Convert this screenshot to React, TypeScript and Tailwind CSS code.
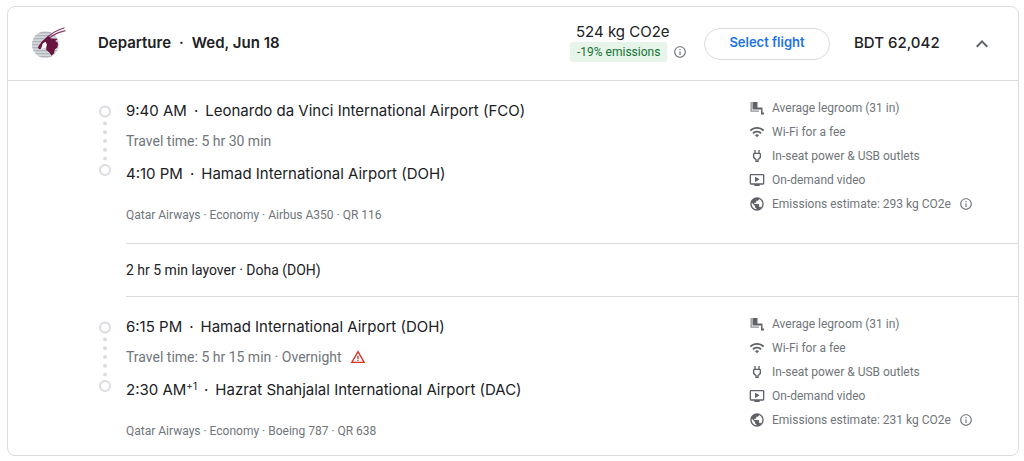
import { useState } from "react";
import type { ReactNode } from "react";
import {
  MdExpandLess,
  MdInfoOutline,
  MdOndemandVideo,
  MdOutlinePower,
  MdPublic,
  MdWarningAmber,
  MdWifi,
} from "react-icons/md";

type Flight = {
  departTime: string;
  from: string;
  duration: string;
  overnight?: boolean;
  arriveTime: string;
  dayOffset?: string;
  to: string;
  details: string;
  emissions: string;
};

const flights: Flight[] = [
  {
    departTime: "9:40 AM",
    from: "Leonardo da Vinci International Airport (FCO)",
    duration: "5 hr 30 min",
    arriveTime: "4:10 PM",
    to: "Hamad International Airport (DOH)",
    details: "Qatar Airways · Economy · Airbus A350 · QR 116",
    emissions: "293 kg CO2e",
  },
  {
    departTime: "6:15 PM",
    from: "Hamad International Airport (DOH)",
    duration: "5 hr 15 min",
    overnight: true,
    arriveTime: "2:30 AM",
    dayOffset: "+1",
    to: "Hazrat Shahjalal International Airport (DAC)",
    details: "Qatar Airways · Economy · Boeing 787 · QR 638",
    emissions: "231 kg CO2e",
  },
];

function AirlineLogo() {
  return (
    <svg className="h-9 w-9 shrink-0" viewBox="0 0 36 36" role="img" aria-label="Qatar Airways">
      <defs>
        <clipPath id="disc">
          <circle cx="13.3" cy="18.5" r="13.3" />
        </clipPath>
      </defs>
      <g clipPath="url(#disc)">
        <rect width="36" height="36" fill="#d3d7db" />
        {[6, 9, 12, 15, 18, 21, 24, 27, 30].map((y) => (
          <rect key={y} y={y} width="36" height="1.3" fill="#afb5bb" />
        ))}
      </g>
      <path
        d="M14 12.5C19 7.5 25 4 32.5 1.7M17.5 12C22 8.3 27 6 33.5 4.7"
        fill="none"
        stroke="#8a3d68"
        strokeWidth="1.2"
      />
      <path
        d="M16.5 9.8 18.8 12.4 25.8 13 23.2 15 26 17 25.6 21 22.8 23.6 22 27.2 19.6 29.8 17.4 26.6 14.2 24 14.6 18.6 13.6 15.8 10.8 17.8 9 22.8 6.8 23.2 6 21 10 15.2Z"
        fill="#6a1442"
      />
      <path d="M10.8 17.8 13.6 15.8 14.6 18.6 13.8 21.8 9.2 22.8Z" fill="#fff" />
    </svg>
  );
}

function SeatIcon() {
  return (
    <svg className="size-4" viewBox="0 0 16 16" fill="currentColor" aria-hidden="true">
      <path d="M3.5 2H8.5V7.5H13.5V12.5H15V14.5H12V9.5H3.5Z" />
      <path d="M1.5 2H2.8V10.5H10V11.8H1.5Z" opacity=".7" />
    </svg>
  );
}

function Timeline() {
  return (
    <svg className="mt-6 h-[72px] w-3 shrink-0" viewBox="0 0 12 72" aria-hidden="true">
      <g fill="none" stroke="#dadce0" strokeWidth="2">
        <circle cx="6" cy="6.5" r="5" />
        <circle cx="6" cy="65" r="5" />
      </g>
      <g fill="#dadce0">
        {[18.5, 27.3, 36, 44.7, 53.5].map((y) => (
          <circle key={y} cx="6" cy={y} r="2" />
        ))}
      </g>
    </svg>
  );
}

function Amenity({ icon, children }: { icon: ReactNode; children: ReactNode }) {
  return (
    <li className="flex h-6 items-center gap-[7px]">
      <span className="text-[#5f6368]">{icon}</span>
      <span>{children}</span>
    </li>
  );
}

function Leg({ flight }: { flight: Flight }) {
  return (
    <section className="flex pl-[91px]">
      <Timeline />
      <div className="min-w-0 flex-1 pt-[18px] pl-[15px]">
        <p className="font-[Inter,sans-serif] text-[15px] leading-6">
          {flight.departTime}
          <span className="px-[7px]">·</span>
          {flight.from}
        </p>
        <p className="mt-2 flex items-center text-[14px] leading-5 text-[#70757a]">
          Travel time: {flight.duration}
          {flight.overnight && (
            <>
              {" · Overnight"}
              <MdWarningAmber className="ml-2 size-4 text-[#d93025]" aria-label="Warning" />
            </>
          )}
        </p>
        <p className="mt-[11px] font-[Inter,sans-serif] text-[15px] leading-6">
          {flight.arriveTime}
          {flight.dayOffset && <sup className="text-[10px]">{flight.dayOffset}</sup>}
          <span className="px-[7px]">·</span>
          {flight.to}
        </p>
        <p className="mt-[21px] text-[12px] leading-4 text-[#70757a]">{flight.details}</p>
      </div>
      <ul className="w-[269px] shrink-0 pt-[15px] text-[12px] text-[#70757a]">
        <Amenity icon={<SeatIcon />}>Average legroom (31 in)</Amenity>
        <Amenity icon={<MdWifi className="size-4" />}>Wi-Fi for a fee</Amenity>
        <Amenity icon={<MdOutlinePower className="size-4" />}>In-seat power &amp; USB outlets</Amenity>
        <Amenity icon={<MdOndemandVideo className="size-4" />}>On-demand video</Amenity>
        <Amenity icon={<MdPublic className="size-4" />}>
          <span className="flex items-center gap-2">
            Emissions estimate: {flight.emissions}
            <MdInfoOutline className="size-[14px]" />
          </span>
        </Amenity>
      </ul>
    </section>
  );
}

export default function App() {
  const [open, setOpen] = useState(true);

  return (
    <main className="min-h-screen bg-white pt-[6px] pr-[5px] pb-1 pl-[7px] font-[Roboto,sans-serif] text-[#202124]">
      <article className="rounded-lg border border-[#dadce0]">
        <header className="flex h-[74px] items-center border-b border-[#dadce0] pr-6 pl-6 font-[Inter,sans-serif]">
          <AirlineLogo />
          <h2 className="ml-[30px] flex-1 text-[15px] font-semibold">
            Departure<span className="px-2">·</span>Wed, Jun 18
          </h2>
          <div className="w-[134px] pb-1">
            <p className="pl-[6px] text-[15px] leading-5">524 kg CO2e</p>
            <div className="flex items-center gap-[6px] font-[Roboto,sans-serif] text-[12px]">
              <span className="rounded-xs bg-[#e6f4ea] px-[7px] leading-5 text-[#137333]">-19% emissions</span>
              <MdInfoOutline className="size-[14px] text-[#70757a]" />
            </div>
          </div>
          <button
            type="button"
            className="h-8 w-[126px] rounded-full border border-[#dadce0] pb-[2px] text-[13px] font-semibold text-[#1a73e8]"
          >
            Select flight
          </button>
          <p className="w-[140px] pl-6 text-[15px] font-medium">BDT 62,042</p>
          <button
            type="button"
            aria-label="Toggle flight details"
            aria-expanded={open}
            onClick={() => setOpen(!open)}
            className="text-[#5f6368]"
          >
            <MdExpandLess className={open ? "size-6" : "size-6 rotate-180"} />
          </button>
        </header>
        {open && (
          <div className="pb-4">
            <Leg flight={flights[0]} />
            <div className="mt-5 ml-[118px] border-y border-[#dadce0] py-4 text-[14px] leading-5">
              2 hr 5 min layover · Doha (DOH)
            </div>
            <Leg flight={flights[1]} />
          </div>
        )}
      </article>
    </main>
  );
}
